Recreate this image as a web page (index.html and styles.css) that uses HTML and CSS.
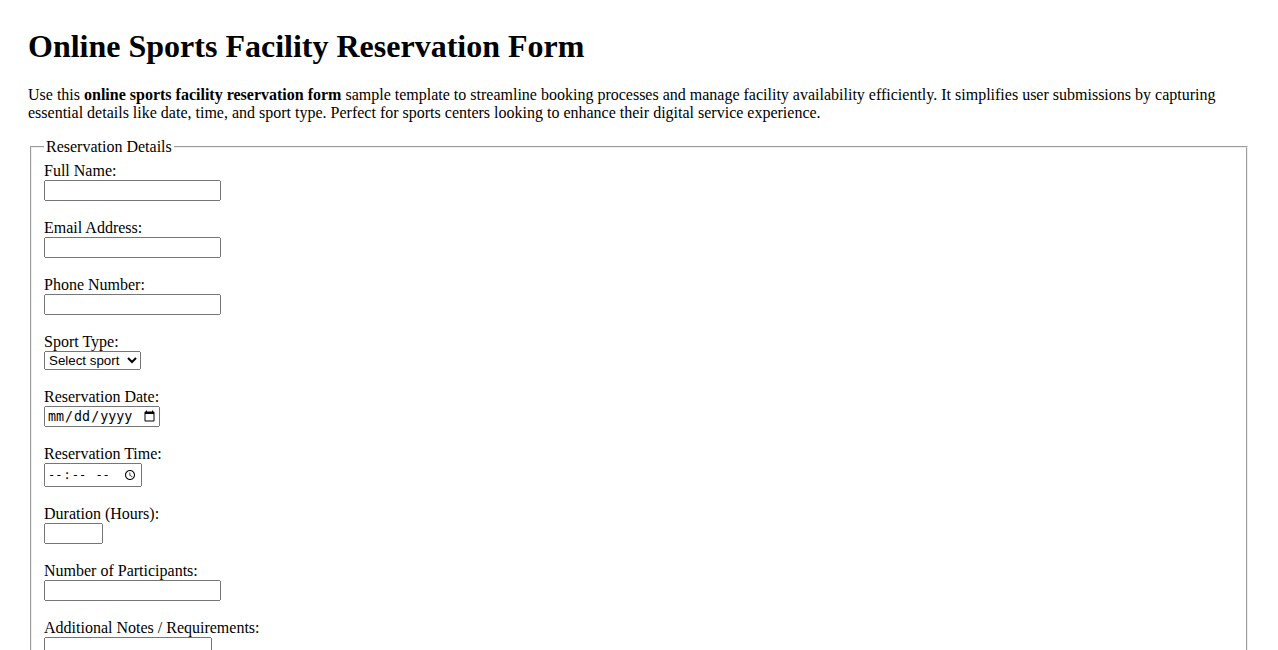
FILE: index.html
```html
<!DOCTYPE html>
<html lang="en">
<head>
<meta charset="utf-8">
<title>Online Sports Facility Reservation Form</title>
<link rel="stylesheet" href="styles.css">
</head>
<body>
<div class="page">
<h1 class="title">Online Sports Facility Reservation Form</h1>
<p class="intro">Use this <strong>online sports facility reservation form</strong> sample template to streamline booking processes and manage facility availability efficiently. It simplifies user submissions by capturing essential details like date, time, and sport type. Perfect for sports centers looking to enhance their digital service experience.</p>
<form class="form">
<fieldset class="group">
<legend class="legend">Reservation Details</legend>
<label class="label" for="name">Full Name:</label><br>
<input class="field text" type="text" id="name"><br><br>
<label class="label" for="email">Email Address:</label><br>
<input class="field text" type="email" id="email"><br><br>
<label class="label" for="phone">Phone Number:</label><br>
<input class="field text" type="tel" id="phone"><br><br>
<label class="label" for="sport">Sport Type:</label><br>
<select class="field choice" id="sport"><option>Select sport</option><option>Tennis</option><option>Basketball</option><option>Football</option></select><br><br>
<label class="label" for="date">Reservation Date:</label><br>
<input class="field date" type="date" id="date"><br><br>
<label class="label" for="time">Reservation Time:</label><br>
<input class="field time" type="time" id="time"><br><br>
<label class="label" for="duration">Duration (Hours):</label><br>
<input class="field short" type="number" id="duration"><br><br>
<label class="label" for="participants">Number of Participants:</label><br>
<input class="field text" type="text" id="participants"><br><br>
<label class="label" for="notes">Additional Notes / Requirements:</label><br>
<textarea class="field notes" id="notes" rows="4" cols="20"></textarea><br><br>
</fieldset>
</form>
</div>
</body>
</html>
```
FILE: styles.css
```css
body {
  margin: 8px;
  font-family: "Liberation Serif", "Times New Roman", serif;
  font-size: 16px;
  color: #000;
  background: #fff;
}
.page {
  padding: 20px;
}
.title {
  font-size: 32px;
  margin: 0 0 21px;
}
.intro {
  margin: 0 0 16px;
}
.field {
  box-sizing: border-box;
}
.text {
  width: 177px;
}
.choice {
  width: 97px;
}
.date {
  width: 116px;
}
.time {
  width: 98px;
  height: 24px;
  font-size: 12px;
  padding-left: 1px;
}
.short {
  width: 59px;
}
.notes {
  width: 168px;
}
```
